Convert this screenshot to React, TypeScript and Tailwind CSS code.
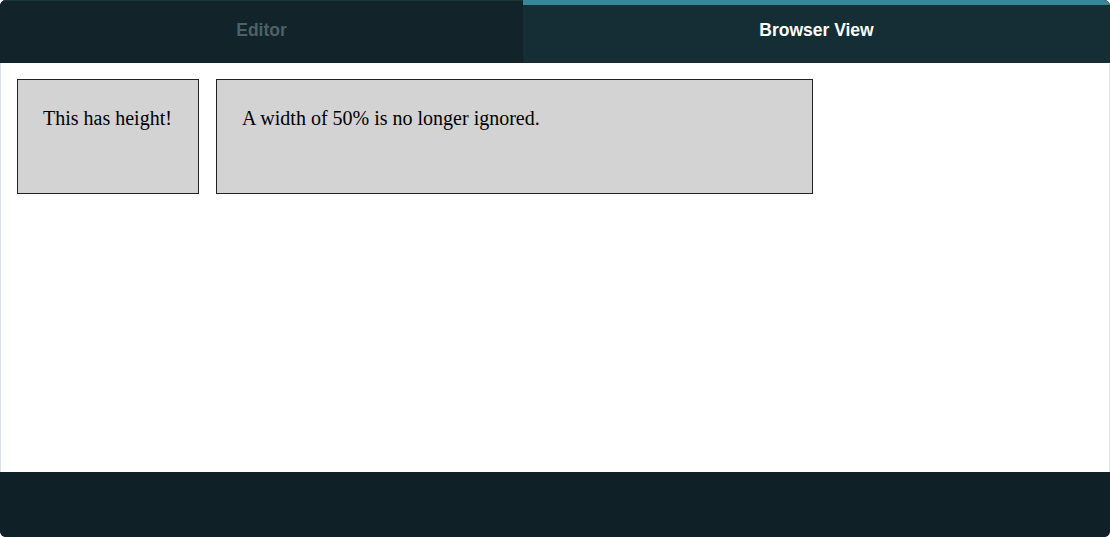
export default function App() {
  return (
    <div className="w-[1110px] h-[537px] flex flex-col overflow-hidden rounded-[6px] bg-[#0f2026]">
      <div className="flex h-[63px] shrink-0 font-['Liberation_Sans',Arial,sans-serif] text-[17.5px] font-bold">
        <div className="w-[523px] flex items-center justify-center bg-[#12232a] border-t border-[#1c353b] text-[#4d6167] pb-[3px]">
          Editor
        </div>
        <div className="flex-1 flex items-center justify-center bg-[#152d34] border-t-[5px] border-[#3a8599] text-white pb-[8px]">
          Browser View
        </div>
      </div>

      <div className="flex-1 bg-white border-x border-[#dde4e7] px-4 py-4 flex items-start gap-[17px] font-['Liberation_Serif','Times_New_Roman',serif] text-[20px] text-black">
        <div className="w-[182px] h-[115px] bg-[#d3d3d3] border border-[#222] px-[25px] pt-[23px] whitespace-nowrap">
          This has height!
        </div>
        <div className="w-[597px] h-[115px] bg-[#d3d3d3] border border-[#222] px-[25px] pt-[23px]">
          A width of 50% is no longer ignored.
        </div>
      </div>

      <div className="h-[65px] shrink-0 bg-[#0f2026]" />
    </div>
  );
}
